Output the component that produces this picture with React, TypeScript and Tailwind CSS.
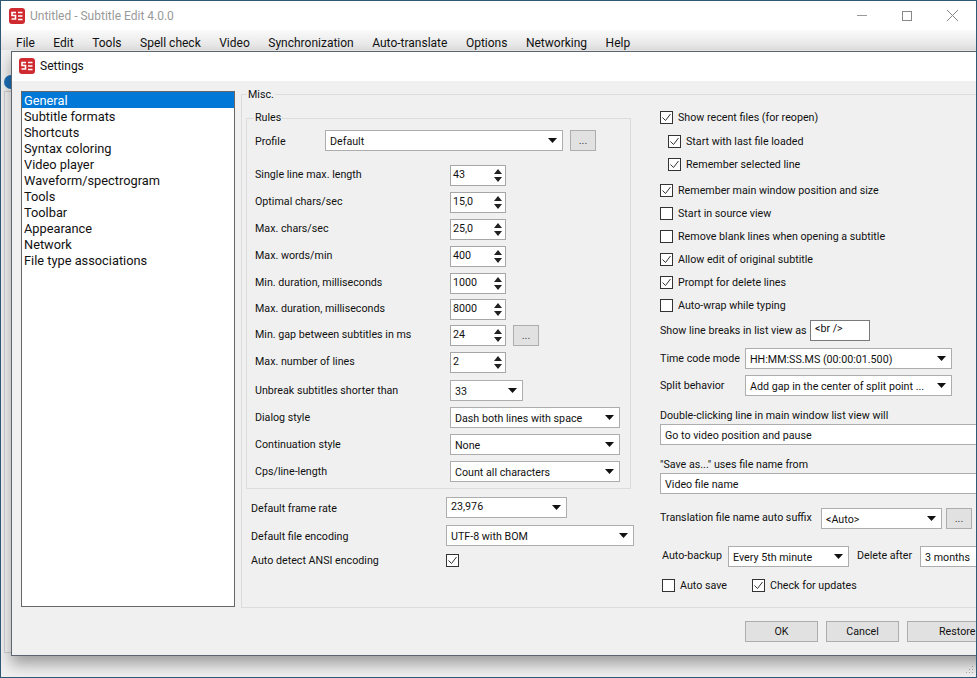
import type { ReactNode } from "react";

function Logo() {
  return (
    <svg width="16" height="16" viewBox="0 0 16 16" className="flex-shrink-0">
      <rect x="0" y="0" width="16" height="16" rx="3" fill="#cf2a2f" />
      <path d="M7 4.5H3v3h3.5v3.5H2.5" fill="none" stroke="#fff" strokeWidth="1.6" />
      <path d="M13.5 4.5H9M13.5 8H9M13.5 11.5H9" fill="none" stroke="#fff" strokeWidth="1.6" />
    </svg>
  );
}

function Arrow() {
  return (
    <svg width="9" height="5" viewBox="0 0 9 5" className="flex-shrink-0">
      <path d="M0 0h9L4.5 5z" fill="#111" />
    </svg>
  );
}

function Combo({ value, className, textClass = "mt-[4px]", arrow = true }: { value: string; className: string; textClass?: string; arrow?: boolean }) {
  return (
    <div className={`h-[21px] flex items-center justify-between bg-white border border-[#adadad] pl-[4px] pr-[5px] flex-shrink-0 ${className}`}>
      <span className={`whitespace-nowrap ${textClass}`}>{value}</span>
      {arrow && <Arrow />}
    </div>
  );
}

function Spin({ value }: { value: string }) {
  return (
    <div className="w-[56px] h-[21px] flex items-center justify-between bg-white border border-[#a6a6a6] pl-[2px] pr-[3px] flex-shrink-0">
      <span>{value}</span>
      <svg width="8" height="13" viewBox="0 0 8 13">
        <path d="M4 0l4 5H0zM0 8h8l-4 5z" fill="#222" />
      </svg>
    </div>
  );
}

function Dots({ className = "" }: { className?: string }) {
  return (
    <div className={`w-[26px] h-[21px] flex items-end justify-center pb-[3px] bg-[#e1e1e1] border border-[#adadad] flex-shrink-0 leading-none text-[#444] ${className}`}>
      ...
    </div>
  );
}

function Row({ label, className = "", labelClass = "-mt-[1px]", children }: { label: string; className?: string; labelClass?: string; children: ReactNode }) {
  return (
    <div className={`flex items-center h-[21px] ${className}`}>
      <span className={`w-[195px] whitespace-nowrap ${labelClass}`}>{label}</span>
      {children}
    </div>
  );
}

function Check({ label, checked = false, className = "" }: { label: string; checked?: boolean; className?: string }) {
  return (
    <div className={`flex items-center h-[16px] ${className}`}>
      <svg width="13" height="13" viewBox="0 0 13 13" className="flex-shrink-0">
        <rect x="0.5" y="0.5" width="12" height="12" fill="#fff" stroke="#333" />
        {checked && <path d="M2.5 6.5l3 3 5-6.5" fill="none" stroke="#333" />}
      </svg>
      {label && <span className="ml-[5px] mt-[2px] whitespace-nowrap">{label}</span>}
    </div>
  );
}

const categories = [
  "General",
  "Subtitle formats",
  "Shortcuts",
  "Syntax coloring",
  "Video player",
  "Waveform/spectrogram",
  "Tools",
  "Toolbar",
  "Appearance",
  "Network",
  "File type associations",
];

const menus = ["File", "Edit", "Tools", "Spell check", "Video", "Synchronization", "Auto-translate", "Options", "Networking", "Help"];

function Settings() {
  return (
    <div className="absolute left-[10px] top-[50px] w-[1100px] h-[605px] flex flex-col bg-[#f0f0f0] border border-[#5d6670] shadow-[0_8px_14px_rgba(0,0,0,0.35)]">
      <div className="h-[29px] flex items-center gap-[5px] pl-[7px] pb-[1px] bg-white text-[12px]">
        <Logo />
        <span>Settings</span>
      </div>
      <div className="flex items-start pl-[9px]">
        <ul className="mt-[10px] w-[214px] h-[516px] bg-white border border-[#666] text-[12.8px] leading-[18px]">
          {categories.map((c, i) => (
            <li key={c} className={`h-[16px] pl-[2px] whitespace-nowrap ${i === 0 ? "bg-[#0078d7] text-white" : ""}`}>
              {c}
            </li>
          ))}
        </ul>
        <fieldset className="mt-[6px] ml-[6px] w-[860px] h-[521px] border border-[#dcdcdc]">
          <legend className="ml-[5px] px-[1px] h-[14px] leading-[16px]">Misc.</legend>
          <div className="flex items-start">
            <LeftColumn />
            <RightColumn />
          </div>
        </fieldset>
      </div>
      <div className="flex mt-[13px] pl-[733px] gap-[8px]">
        <div className="w-[73px] h-[21px] pt-[2px] flex items-center justify-center bg-[#e1e1e1] border border-[#adadad]">OK</div>
        <div className="w-[73px] h-[21px] pt-[2px] flex items-center justify-center bg-[#e1e1e1] border border-[#adadad]">Cancel</div>
        <div className="w-[148px] h-[21px] pt-[2px] flex items-center pl-[31px] bg-[#e1e1e1] border border-[#adadad]">Restore</div>
      </div>
    </div>
  );
}

function LeftColumn() {
  return (
    <div className="w-[418px] flex-shrink-0">
      <fieldset className="mt-[10px] ml-[4px] w-[385px] h-[378px] border border-[#dcdcdc] pl-[8px]">
        <legend className="-ml-[1px] px-[1px] h-[14px] leading-[14px]">Rules</legend>
        <div className="flex items-center h-[21px] mt-[5px]">
          <span className="w-[70px] mt-[4px] whitespace-nowrap">Profile</span>
          <Combo value="Default" className="w-[238px]" />
          <Dots className="ml-[7px]" />
        </div>
        <Row label="Single line max. length" className="mt-[14px]"><Spin value="43" /></Row>
        <Row label="Optimal chars/sec" className="mt-[6px]"><Spin value="15,0" /></Row>
        <Row label="Max. chars/sec" className="mt-[6px]"><Spin value="25,0" /></Row>
        <Row label="Max. words/min" className="mt-[6px]"><Spin value="400" /></Row>
        <Row label="Min. duration, milliseconds" className="mt-[6px]"><Spin value="1000" /></Row>
        <Row label="Max. duration, milliseconds" className="mt-[5px]"><Spin value="8000" /></Row>
        <Row label="Min. gap between subtitles in ms" className="mt-[5px]">
          <Spin value="24" />
          <Dots className="ml-[7px]" />
        </Row>
        <Row label="Max. number of lines" className="mt-[6px]"><Spin value="2" /></Row>
        <Row label="Unbreak subtitles shorter than" labelClass="mt-[1px]" className="mt-[7px]">
          <Combo value="33" className="w-[73px]" />
        </Row>
        <Row label="Dialog style" labelClass="mt-[1px]" className="mt-[6px]">
          <Combo value="Dash both lines with space" className="w-[170px]" />
        </Row>
        <Row label="Continuation style" labelClass="mt-[1px]" className="mt-[6px]">
          <Combo value="None" className="w-[170px]" />
        </Row>
        <Row label="Cps/line-length" labelClass="mt-[1px]" className="mt-[6px]">
          <Combo value="Count all characters" className="w-[170px]" />
        </Row>
      </fieldset>
      <div className="pl-[9px]">
        <div className="flex items-center h-[21px] mt-[8px]">
          <span className="w-[195px] mt-[4px] whitespace-nowrap">Default frame rate</span>
          <Combo value="23,976" className="w-[121px]" textClass="-mt-[1px]" />
        </div>
        <div className="flex items-center h-[21px] mt-[7px]">
          <span className="w-[195px] mt-[4px] whitespace-nowrap">Default file encoding</span>
          <Combo value="UTF-8 with BOM" className="w-[188px]" />
        </div>
        <div className="flex items-center h-[16px] mt-[6px]">
          <span className="w-[195px] mt-[2px] whitespace-nowrap">Auto detect ANSI encoding</span>
          <Check label="" checked />
        </div>
      </div>
    </div>
  );
}

function RightColumn() {
  return (
    <div className="flex-1 min-w-0 pt-[8px]">
      <Check label="Show recent files (for reopen)" checked />
      <Check label="Start with last file loaded" checked className="mt-[8px] ml-[8px]" />
      <Check label="Remember selected line" checked className="mt-[7px] ml-[8px]" />
      <Check label="Remember main window position and size" checked className="mt-[10px]" />
      <Check label="Start in source view" className="mt-[7px]" />
      <Check label="Remove blank lines when opening a subtitle" className="mt-[7px]" />
      <Check label="Allow edit of original subtitle" checked className="mt-[7px]" />
      <Check label="Prompt for delete lines" checked className="mt-[7px]" />
      <Check label="Auto-wrap while typing" className="mt-[7px]" />
      <div className="flex items-center h-[21px] mt-[7px]">
        <span className="w-[150px] mt-[2px] whitespace-nowrap">Show line breaks in list view as</span>
        <div className="w-[60px] h-[21px] pl-[4px] bg-white border border-[#7a7a7a] leading-[15px]">{"<br />"}</div>
      </div>
      <div className="flex items-center h-[21px] mt-[7px]">
        <span className="w-[85px] mt-[2px] whitespace-nowrap">Time code mode</span>
        <Combo value="HH:MM:SS.MS (00:00:01.500)" className="w-[207px]" />
      </div>
      <div className="flex items-center h-[21px] mt-[6px]">
        <span className="w-[85px] mt-[2px] whitespace-nowrap">Split behavior</span>
        <Combo value="Add gap in the center of split point ..." className="w-[207px]" />
      </div>
      <div className="h-[16px] mt-[11px] leading-[18px] whitespace-nowrap">Double-clicking line in main window list view will</div>
      <Combo value="Go to video position and pause" className="w-[330px] mt-[1px]" arrow={false} />
      <div className="h-[16px] mt-[11px] leading-[18px] whitespace-nowrap">"Save as..." uses file name from</div>
      <Combo value="Video file name" className="w-[330px] mt-[1px]" arrow={false} />
      <div className="flex items-center h-[21px] mt-[14px]">
        <span className="w-[161px] whitespace-nowrap">Translation file name auto suffix</span>
        <Combo value="<Auto>" className="w-[121px]" />
        <Dots className="ml-[4px]" />
      </div>
      <div className="flex items-center h-[21px] mt-[17px] pl-[2px]">
        <span className="w-[66px] whitespace-nowrap">Auto-backup</span>
        <Combo value="Every 5th minute" className="w-[121px]" />
        <span className="ml-[8px] w-[63px] whitespace-nowrap">Delete after</span>
        <Combo value="3 months" className="w-[120px]" arrow={false} />
      </div>
      <div className="flex mt-[10px] pl-[2px]">
        <Check label="Auto save" className="w-[90px]" />
        <Check label="Check for updates" checked />
      </div>
    </div>
  );
}

export default function App() {
  return (
    <div className="relative w-[977px] h-[678px] overflow-hidden flex flex-col bg-[#f0f0f0] border border-[#2f5874] text-[10.7px] text-[#111] font-['Roboto',sans-serif]">
      <div className="h-[29px] flex items-center bg-white pl-[8px] gap-[5px]">
        <Logo />
        <span className="text-[12px] text-[#999]">Untitled - Subtitle Edit 4.0.0</span>
        <div className="ml-auto flex items-center gap-[35px] pr-[18px]">
          <div className="w-[10px] h-px bg-[#999]" />
          <div className="w-[10px] h-[10px] border border-[#888]" />
          <svg width="11" height="11" viewBox="0 0 11 11"><path d="M0 0l11 11M11 0L0 11" stroke="#888" /></svg>
        </div>
      </div>
      <div className="h-[20px] flex items-center gap-[18.5px] pl-[15px] pt-[6px] bg-gradient-to-b from-[#fafafa] to-[#e2e2e2] text-[12px]">
        {menus.map((m) => <span key={m}>{m}</span>)}
      </div>
      <div className="flex-1 flex justify-between pl-[3px] pt-[25px]">
        <div>
          <div className="w-[14px] h-[14px] rounded-full bg-[#1b6fb5]" />
          <div className="mt-[2px] w-[10px] h-[562px] border border-[#cfcfcf] bg-[#f4f4f4]" />
        </div>
        <svg width="10" height="10" viewBox="0 0 10 10" className="self-end mb-[2px] mr-[2px]">
          <path d="M8 1h1v1H8zM5 4h1v1H5zM8 4h1v1H8zM2 7h1v1H2zM5 7h1v1H5zM8 7h1v1H8z" fill="#aaa" />
        </svg>
      </div>
      <Settings />
    </div>
  );
}
